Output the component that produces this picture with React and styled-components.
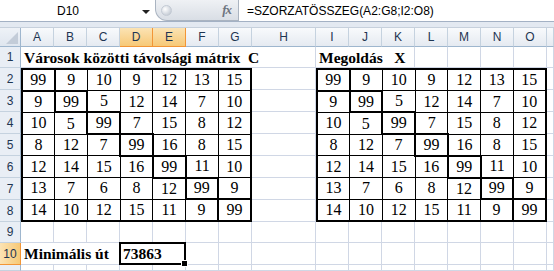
import React from "react";
import styled, { createGlobalStyle } from "styled-components";

const GlobalStyle = createGlobalStyle`
  html, body { margin: 0; padding: 0; background: #fff; }
  body { width: 554px; height: 271px; overflow: hidden; font-family: "Liberation Sans", Arial, sans-serif; }
`;

const C = [
  [99, 9, 10, 9, 12, 13, 15],
  [9, 99, 5, 12, 14, 7, 10],
  [10, 5, 99, 7, 15, 8, 12],
  [8, 12, 7, 99, 16, 8, 15],
  [12, 14, 15, 16, 99, 11, 10],
  [13, 7, 6, 8, 12, 99, 9],
  [14, 10, 12, 15, 11, 9, 99],
];

const LETTERS = ["A", "B", "C", "D", "E", "F", "G", "H", "I", "J", "K", "L", "M", "N", "O", ""];
const SELECTED_COLS = ["D", "E"];

const Page = styled.div`
  width: 554px;
  height: 271px;
  display: flex;
  flex-direction: column;
  overflow: hidden;
  background: #fff;
`;

const FormulaBar = styled.div`
  height: 21px;
  display: flex;
  align-items: stretch;
  background: #fff;
  border-bottom: 1px solid #a3b1c4;
  flex: none;
`;

const NameBox = styled.div`
  width: 136px;
  display: flex;
  align-items: center;
  justify-content: center;
  font-size: 12px;
  color: #000;
`;

const DropArrow = styled.div`
  width: 19px;
  display: flex;
  align-items: center;
  justify-content: center;
  &::after {
    content: "";
    border-left: 4px solid transparent;
    border-right: 4px solid transparent;
    border-top: 4px solid #222;
    margin-top: 2px;
  }
`;

const FxPill = styled.div`
  width: 84px;
  margin-top: -2px;
  height: 23px;
  box-sizing: border-box;
  border: 1px solid #aab4c1;
  border-top: none;
  border-radius: 0 0 0 12px;
  background: linear-gradient(#f1f3f6, #d9dee5);
  display: flex;
  align-items: center;
  justify-content: space-between;
  padding: 2px 7px 0 5px;
`;

const Knob = styled.div`
  width: 9px;
  height: 9px;
  border-radius: 50%;
  background: radial-gradient(circle at 35% 35%, #ffffff 0%, #d6dbe2 55%, #b7bfca 100%);
  border: 1px solid #c3cad4;
`;

const Fx = styled.span`
  font-family: "Liberation Serif", "Times New Roman", serif;
  font-style: italic;
  font-weight: bold;
  font-size: 13px;
  color: #6d7480;
  letter-spacing: -1px;
`;

const FormulaText = styled.div`
  padding-left: 8px;
  display: flex;
  align-items: center;
  font-size: 12px;
  color: #000;
`;

const Band = styled.div`
  height: 5px;
  background: #e3e9f1;
  border-bottom: 1px solid #c6d0dc;
  flex: none;
`;

const Sheet = styled.div`
  display: grid;
  grid-template-columns: 21px repeat(7, 33px) 64px repeat(7, 33px) 1fr;
  grid-template-rows: 19px 21px repeat(7, 22px) 21px 22px 1fr;
  flex: 1;
  min-height: 0;
`;

const Corner = styled.div`
  grid-column: 1;
  grid-row: 1;
  box-sizing: border-box;
  background: linear-gradient(#eef2f7, #dfe6ef);
  border-right: 1px solid #9eb6ce;
  border-bottom: 1px solid #9eb6ce;
  position: relative;
  overflow: hidden;
  &::after {
    content: "";
    position: absolute;
    right: 2px;
    bottom: 2px;
    border-left: 12px solid transparent;
    border-bottom: 12px solid #c3ccd8;
  }
`;

const ColHead = styled.div`
  grid-row: 1;
  grid-column: ${(p) => p.col};
  box-sizing: border-box;
  display: flex;
  align-items: center;
  justify-content: center;
  font-size: 12px;
  color: #1e3552;
  background: ${(p) =>
    p.selected
      ? "linear-gradient(#fbe3b4, #f7c977)"
      : "linear-gradient(#f8fafc, #e5eaf1)"};
  border-right: 1px solid ${(p) => (p.selected ? "#f29536" : "#c5d2df")};
  border-bottom: 1px solid ${(p) => (p.selected ? "#f29536" : "#9eb6ce")};
`;

const RowHead = styled.div`
  grid-column: 1;
  grid-row: ${(p) => p.row};
  box-sizing: border-box;
  display: flex;
  align-items: center;
  justify-content: center;
  font-size: 12px;
  color: #1e3552;
  background: ${(p) =>
    p.selected ? "linear-gradient(90deg, #fbe3b4, #f7c977)" : "#e9eef5"};
  border-right: 1px solid ${(p) => (p.selected ? "#f29536" : "#9eb6ce")};
  border-bottom: 1px solid ${(p) => (p.selected ? "#f29536" : "#c5d2df")};
`;

const Cell = styled.div`
  grid-column: ${(p) => p.col} / span ${(p) => p.span || 1};
  grid-row: ${(p) => p.row};
  box-sizing: border-box;
  border-right: 1px solid #d0d7e5;
  border-bottom: 1px solid #d0d7e5;
  background: #fff;
  min-width: 0;
`;

const LabelCell = styled(Cell)`
  display: flex;
  align-items: center;
  padding: 1px 0 0 3px;
  white-space: pre;
  font-family: "Liberation Serif", "Times New Roman", serif;
  font-weight: bold;
  font-size: 15.5px;
  color: #000;
`;

const SelectedCell = styled.div`
  grid-column: ${(p) => p.col} / span ${(p) => p.span};
  grid-row: ${(p) => p.row};
  box-sizing: border-box;
  position: relative;
  margin: -1px 0 0 -1px;
  border: 2px solid #000;
  background: #fff;
  display: flex;
  align-items: center;
  padding: 1px 0 0 2px;
  font-family: "Liberation Serif", "Times New Roman", serif;
  font-weight: bold;
  font-size: 15.5px;
  color: #000;
`;

const FillHandle = styled.span`
  position: absolute;
  right: -4px;
  bottom: -4px;
  width: 5px;
  height: 5px;
  background: #000;
  border: 1px solid #fff;
`;

const MatrixSlot = styled.div`
  grid-column: ${(p) => p.col} / span 7;
  grid-row: 3 / span 7;
  background: #fff;
  display: flex;
`;

const Matrix = styled.table`
  width: 100%;
  height: 100%;
  border-collapse: collapse;
  table-layout: fixed;
  border: 2px solid #000;
`;

const MCell = styled.td`
  padding: 0;
  border: ${(p) => (p.diag ? "2px" : "1px")} solid #000;
  text-align: center;
  vertical-align: middle;
  font-family: "Liberation Serif", "Times New Roman", serif;
  font-size: 16px;
  color: #000;
  line-height: 18px;
`;

function MatrixBlock({ col }) {
  return (
    <MatrixSlot col={col}>
      <Matrix>
        <tbody>
          {C.map((r, i) => (
            <tr key={i}>
              {r.map((v, j) => (
                <MCell key={j} diag={i === j}>
                  {v}
                </MCell>
              ))}
            </tr>
          ))}
        </tbody>
      </Matrix>
    </MatrixSlot>
  );
}

export default function App() {
  const cells = [];
  // row 1 (grid row 2): title overflows from A into H
  cells.push(
    <LabelCell key="t1" col={2} span={8} row={2}>
      {"Városok közötti távolsági mátrix  C"}
    </LabelCell>
  );
  cells.push(
    <LabelCell key="t2" col={10} span={3} row={2}>
      {"Megoldás   X"}
    </LabelCell>
  );
  [13, 14, 15, 16, 17].forEach((c) => cells.push(<Cell key={"r1c" + c} col={c} row={2} />));
  // rows 2..8: H and P columns
  for (let r = 3; r <= 9; r++) {
    cells.push(<Cell key={"h" + r} col={9} row={r} />);
    cells.push(<Cell key={"p" + r} col={17} row={r} />);
  }
  // row 9 and row 11
  [10, 12].forEach((r) => {
    for (let c = 2; c <= 17; c++) cells.push(<Cell key={`r${r}c${c}`} col={c} row={r} />);
  });
  // row 10
  cells.push(
    <LabelCell key="min" col={2} span={3} row={11}>
      Minimális út
    </LabelCell>
  );
  for (let c = 7; c <= 17; c++) cells.push(<Cell key={"r11c" + c} col={c} row={11} />);

  return (
    <Page>
      <GlobalStyle />
      <FormulaBar>
        <NameBox>D10</NameBox>
        <DropArrow />
        <FxPill>
          <Knob />
          <Fx>fx</Fx>
        </FxPill>
        <FormulaText>=SZORZATÖSSZEG(A2:G8;I2:O8)</FormulaText>
      </FormulaBar>
      <Band />
      <Sheet>
        <Corner />
        {LETTERS.map((l, i) => (
          <ColHead key={"c" + i} col={i + 2} selected={SELECTED_COLS.includes(l)}>
            {l}
          </ColHead>
        ))}
        {Array.from({ length: 11 }, (_, i) => (
          <RowHead key={"r" + i} row={i + 2} selected={i + 1 === 10}>
            {i + 1 <= 10 ? i + 1 : ""}
          </RowHead>
        ))}
        {cells}
        <MatrixBlock col={2} />
        <MatrixBlock col={10} />
        <SelectedCell col={5} span={2} row={11}>
          73863
          <FillHandle />
        </SelectedCell>
      </Sheet>
    </Page>
  );
}
